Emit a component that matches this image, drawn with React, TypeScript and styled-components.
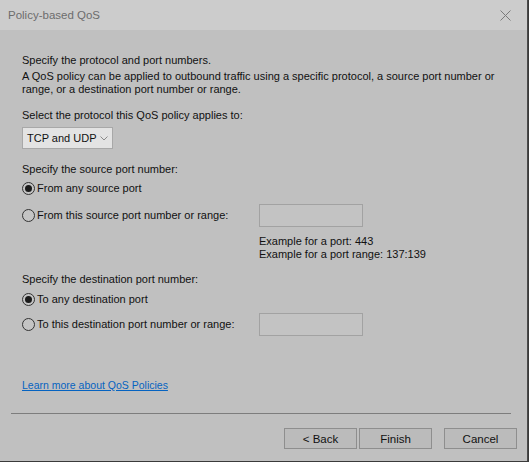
import React from "react";
import styled, { createGlobalStyle } from "styled-components";

const Global = createGlobalStyle`
  html, body { margin: 0; padding: 0; background: #3a3a3a; }
  body { font-family: "Liberation Sans", Arial, sans-serif; }
`;

const Window = styled.div`
  width: 527px;
  height: 461px;
  background: #c0c0c0;
  border-right: 1px solid #4a4a4a;
  display: flex;
  flex-direction: column;
  font-family: "Liberation Sans", Arial, sans-serif;
  font-size: 11px;
  color: #111;
  overflow: hidden;
`;

const TitleBar = styled.div`
  height: 30px;
  flex: none;
  background: #cccccc;
  display: flex;
  align-items: center;
  justify-content: space-between;
  padding: 0 16px 0 8px;
`;

const Title = styled.span`
  font-size: 11.5px;
  color: #6c6c6c;
`;

const Content = styled.div`
  flex: 1;
  display: flex;
  flex-direction: column;
  padding: 24px 22px 0 22px;
`;

const Text = styled.div<{ $mt?: number; $indent?: number }>`
  line-height: 13px;
  margin-top: ${(p) => p.$mt ?? 0}px;
  margin-left: ${(p) => p.$indent ?? 0}px;
  white-space: nowrap;
`;

const Combo = styled.div`
  margin-top: 5px;
  height: 20px;
  border: 1px solid #a8a8a8;
  background: #e3e3e3;
  display: flex;
  align-items: center;
  justify-content: space-between;
  padding: 0 4px 0 4px;
  box-sizing: content-box;
  width: 81px;
  white-space: nowrap;
`;

const RadioRow = styled.div<{ $mt: number; $h: number }>`
  margin-top: ${(p) => p.$mt}px;
  height: ${(p) => p.$h}px;
  display: flex;
  align-items: center;
`;

const RadioLabel = styled.label`
  display: flex;
  align-items: center;
  gap: 2px;
  width: 237px;
  line-height: 13px;
  white-space: nowrap;
`;

const RadioCircle = styled.span<{ $checked?: boolean }>`
  width: 11px;
  height: 11px;
  border-radius: 50%;
  border: 1px solid #333;
  background: #c4c4c4;
  display: flex;
  align-items: center;
  justify-content: center;
  flex: none;
  &::after {
    content: "";
    width: 7px;
    height: 7px;
    border-radius: 50%;
    background: #1a1a1a;
    display: ${(p) => (p.$checked ? "block" : "none")};
  }
`;

const PortBox = styled.div`
  width: 102px;
  height: 21px;
  border: 1px solid #a2a2a2;
  background: #c3c3c3;
`;

const Link = styled.a`
  margin-top: 43px;
  color: #0563c1;
  font-size: 10.5px;
  text-decoration: underline;
  line-height: 13px;
  align-self: flex-start;
  cursor: pointer;
`;

const Footer = styled.div`
  margin-top: auto;
  padding-bottom: 12px;
  display: flex;
  flex-direction: column;
`;

const Separator = styled.div`
  height: 1px;
  background: #7d7d7d;
  margin: 0 16px 0 11px;
`;

const ButtonRow = styled.div`
  display: flex;
  justify-content: flex-end;
  padding: 14px 10px 0 0;
`;

const Button = styled.button<{ $ml?: number }>`
  width: 73px;
  height: 21px;
  margin-left: ${(p) => p.$ml ?? 0}px;
  border: 1px solid #8e8e8e;
  background: #bbbbbb;
  font-family: "Liberation Sans", Arial, sans-serif;
  font-size: 11.5px;
  color: #111;
  padding: 0;
`;

const Chevron = () => (
  <svg width="8" height="5" viewBox="0 0 8 5">
    <polyline points="0.5,0.5 4,4 7.5,0.5" fill="none" stroke="#8a8a8a" strokeWidth="1" />
  </svg>
);

const CloseIcon = () => (
  <svg width="11" height="11" viewBox="0 0 11 11">
    <path d="M0.5 0.5 L10.5 10.5 M10.5 0.5 L0.5 10.5" stroke="#7a7a7a" strokeWidth="1" />
  </svg>
);

export default function App() {
  return (
    <>
      <Global />
      <Window>
        <TitleBar>
          <Title>Policy-based QoS</Title>
          <CloseIcon />
        </TitleBar>
        <Content>
          <Text>Specify the protocol and port numbers.</Text>
          <Text $mt={3}>
            A QoS policy can be applied to outbound traffic using a specific protocol, a source port number or
            <br />
            range, or a destination port number or range.
          </Text>
          <Text $mt={13}>Select the protocol this QoS policy applies to:</Text>
          <Combo>
            <span>TCP and UDP</span>
            <Chevron />
          </Combo>
          <Text $mt={14}>Specify the source port number:</Text>
          <RadioRow $mt={2} $h={20}>
            <RadioLabel>
              <RadioCircle $checked />
              From any source port
            </RadioLabel>
          </RadioRow>
          <RadioRow $mt={6} $h={23}>
            <RadioLabel>
              <RadioCircle />
              From this source port number or range:
            </RadioLabel>
            <PortBox />
          </RadioRow>
          <Text $mt={8} $indent={237}>Example for a port: 443</Text>
          <Text $indent={237}>Example for a port range: 137:139</Text>
          <Text $mt={12}>Specify the destination port number:</Text>
          <RadioRow $mt={3} $h={20}>
            <RadioLabel>
              <RadioCircle $checked />
              To any destination port
            </RadioLabel>
          </RadioRow>
          <RadioRow $mt={4} $h={23}>
            <RadioLabel>
              <RadioCircle />
              To this destination port number or range:
            </RadioLabel>
            <PortBox />
          </RadioRow>
          <Link>Learn more about QoS Policies</Link>
        </Content>
        <Footer>
          <Separator />
          <ButtonRow>
            <Button>&lt; Back</Button>
            <Button $ml={2}>Finish</Button>
            <Button $ml={12}>Cancel</Button>
          </ButtonRow>
        </Footer>
      </Window>
    </>
  );
}
